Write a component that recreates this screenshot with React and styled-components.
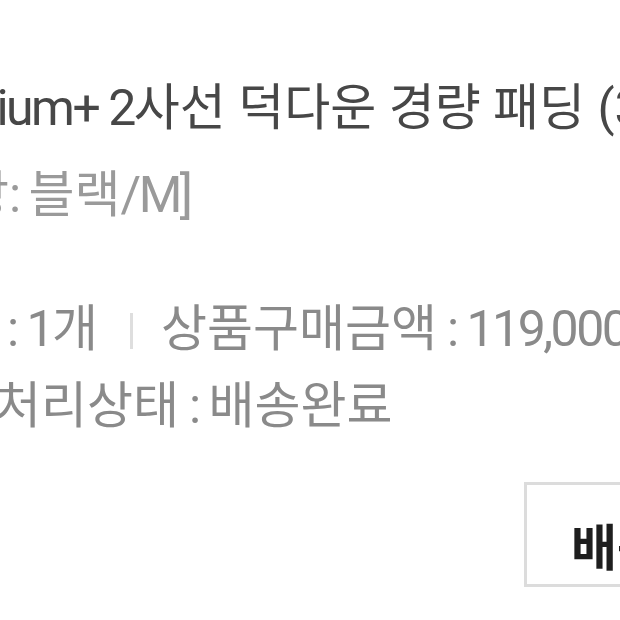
import React from "react";
import styled, { createGlobalStyle } from "styled-components";

const GlobalStyle = createGlobalStyle`
  html, body {
    margin: 0;
    padding: 0;
    background: #fff;
  }
  body {
    font-family: Roboto, "Noto Sans CJK KR", "Noto Sans", sans-serif;
  }
`;

const Viewport = styled.div`
  width: 620px;
  height: 620px;
  overflow: hidden;
  background: #fff;
`;

const OrderItem = styled.div`
  padding-top: 78px;
  display: flex;
  flex-direction: column;
`;

const Line = styled.div`
  white-space: nowrap;
  font-size: 50px;
  margin-left: ${({ $shift }) => $shift || 0}px;
`;

// latin letters, digits and colons run narrower than the hangul in this font
const Latin = styled.span`
  letter-spacing: -2.5px;
`;

const Title = styled(Line)`
  color: #474747;
  line-height: 60px;
`;

const Option = styled(Line)`
  color: #9a9a9a;
  line-height: 60px;
  margin-top: 27px;
`;

const Info = styled.div`
  margin-top: 66px;
  display: flex;
  flex-direction: column;
`;

const InfoLine = styled(Line)`
  color: #8a8a8a;
  line-height: 77px;
`;

const Divider = styled.span`
  display: inline-block;
  width: 3px;
  height: 36px;
  background: #dedede;
  margin: 0 28px 0 32px;
  vertical-align: -3px;
`;

const Actions = styled.div`
  margin-top: 37px;
  padding-left: 524px;
  display: flex;
`;

const Button = styled.button`
  flex: none;
  width: 260px;
  height: 105px;
  box-sizing: border-box;
  border: 3px solid #dcdcdc;
  background: #fff;
  padding: 18px 0 0 44px;
  text-align: left;
  font-family: Roboto, "Noto Sans CJK KR", sans-serif;
  font-size: 50px;
  font-weight: 700;
  color: #1e1e1e;
  white-space: nowrap;
`;

export default function App() {
  return (
    <Viewport>
      <GlobalStyle />
      <OrderItem>
        <Title $shift={-112}>
          <Latin>Premium+ 2</Latin>사선 덕다운 경량 패딩 (<Latin>3color</Latin>)
        </Title>
        <Option $shift={-37}>
          상<Latin>: </Latin>블랙<Latin>/M]</Latin>
        </Option>
        <Info>
          <InfoLine $shift={-95}>
            수량<Latin> : 1</Latin>개<Divider />상품구매금액<Latin> : 119,000</Latin>원
          </InfoLine>
          <InfoLine $shift={-5}>
            처리상태<Latin> : </Latin>배송완료
          </InfoLine>
        </Info>
        <Actions>
          <Button>배송조회</Button>
        </Actions>
      </OrderItem>
    </Viewport>
  );
}
